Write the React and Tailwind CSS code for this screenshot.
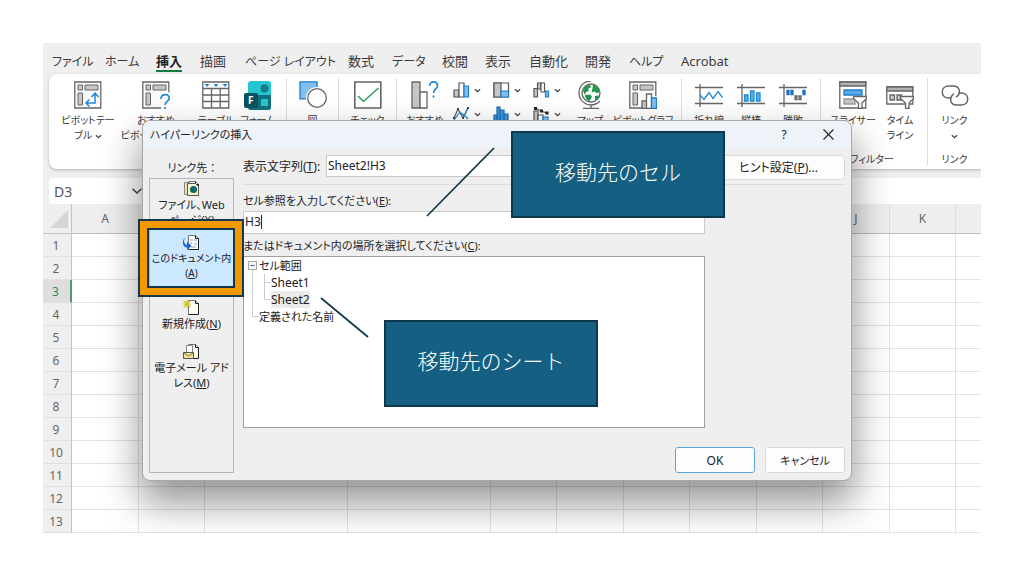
import clsx from "clsx";

const TABS = [
  { label: "ファイル", width: "w-[53px]", kana: true },
  { label: "ホーム", width: "w-[51px]", kana: true },
  { label: "挿入", width: "w-[44px]", active: true },
  { label: "描画", width: "w-[45px]" },
  { label: "ページ レイアウト", width: "w-[103px]", kana: true },
  { label: "数式", width: "w-[44px]" },
  { label: "データ", width: "w-[50px]", kana: true },
  { label: "校閲", width: "w-[43px]" },
  { label: "表示", width: "w-[44px]" },
  { label: "自動化", width: "w-[56px]" },
  { label: "開発", width: "w-[44px]" },
  { label: "ヘルプ", width: "w-[52px]", kana: true },
  { label: "Acrobat", width: "w-[60px]" },
];

const COLUMNS = [
  { name: "A", width: "w-[67px]" },
  { name: "B", width: "w-[66px]" },
  { name: "C", width: "w-[143px]" },
  { name: "D", width: "w-[143px]" },
  { name: "E", width: "w-[66px]" },
  { name: "F", width: "w-[67px]" },
  { name: "G", width: "w-[66px]" },
  { name: "H", width: "w-[67px]" },
  { name: "I", width: "w-[66px]" },
  { name: "J", width: "w-[67px]" },
  { name: "K", width: "w-[66px]" },
  { name: "", width: "w-auto" },
];

const ROWS = [1, 2, 3, 4, 5, 6, 7, 8, 9, 10, 11, 12, 13];

export default function App() {
  return (
    <div className="bg-white p-[43px] font-['Noto_Sans','Noto_Sans_CJK_JP',sans-serif] [font-feature-settings:'palt'] text-[#3b3b3b]">
      <div className="relative overflow-hidden bg-[#efefef]">
        <MenuTabs />
        <Ribbon />
        <FormulaRow />
        <Sheet />
        <HyperlinkDialog />
        <Annotations />
      </div>
    </div>
  );
}

function MenuTabs() {
  return (
    <nav className="flex h-[31px] pl-[9px] pt-2 leading-[18px]">
      {TABS.map((tab) => (
        <div key={tab.label} className={clsx("shrink-0", tab.width)}>
          <button
            className={clsx(
              "whitespace-nowrap",
              tab.kana ? "text-[12px]" : "text-[13px]",
              tab.active && "border-b-2 border-[#107c41] font-bold text-[#222]"
            )}
          >
            {tab.label}
          </button>
        </div>
      ))}
    </nav>
  );
}

function Ribbon() {
  return (
    <div className="ml-[6px] flex h-[95px] overflow-hidden rounded-l-lg bg-white pl-[5px] text-[10px] leading-[15px] shadow-[0_1px_3px_rgba(0,0,0,0.25)]">
      <Tool width="w-[68px]" icon={<PivotIcon />} label={<>ピボットテー<br />ブル <Caret /></>} />
      <Tool width="w-[68px]" icon={<PivotHelpIcon />} label={<>おすすめ<br />ピボットテーブル</>} />
      <Tool width="w-[52px]" icon={<TableIcon />} label="テーブル" />
      <Tool width="w-[32px]" icon={<FormsIcon />} label="フォーム" />
      <Divider className="ml-3" />
      <Tool width="w-[51px]" icon={<ShapesIcon />} label="図" />
      <Divider />
      <Tool width="w-[57px]" icon={<CheckIcon />} label="チェック" />
      <Divider />
      <Tool width="w-[56px]" icon={<ChartHelpIcon />} label="おすすめ" />
      <div className="grid shrink-0 grid-cols-[40px_40px_40px] grid-rows-[16px_16px] content-start gap-y-2 pt-2">
        <MiniTool><ColumnChartIcon /></MiniTool>
        <MiniTool><TreemapIcon /></MiniTool>
        <MiniTool><WaterfallIcon /></MiniTool>
        <MiniTool><LineChartIcon /></MiniTool>
        <MiniTool><HistogramIcon /></MiniTool>
        <MiniTool><ComboChartIcon /></MiniTool>
      </div>
      <Tool width="w-[34px]" icon={<GlobeIcon />} label="マップ" />
      <Tool width="w-[72px]" icon={<PivotChartIcon />} label="ピボットグラフ" />
      <Divider className="ml-0.5" />
      <div className="flex shrink-0 px-[6px]">
        <Tool width="w-[42px]" icon={<SparkLineIcon />} label="折れ線" />
        <Tool width="w-[42px]" icon={<SparkColumnIcon />} label="縦棒" />
        <Tool width="w-[42px]" icon={<SparkWinLossIcon />} label="勝敗" />
      </div>
      <Divider />
      <div className="flex shrink-0 flex-col pr-3">
        <div className="flex flex-1">
          <Tool width="w-[64px]" icon={<SlicerIcon />} label="スライサー" />
          <Tool width="w-[30px]" icon={<TimelineIcon />} label={<>タイム<br />ライン</>} />
        </div>
        <div className="pb-[2px] pl-2 text-center">フィルター</div>
      </div>
      <Divider />
      <div className="flex w-[53px] shrink-0 flex-col">
        <div className="flex flex-1">
          <Tool width="w-[53px]" icon={<LinkIcon />} label={<>リンク<br /><Caret /></>} />
        </div>
        <div className="pb-[2px] text-center">リンク</div>
      </div>
      <Divider />
    </div>
  );
}

function Tool({ icon, label, width }) {
  return (
    <button className={clsx("flex shrink-0 flex-col items-center gap-1 whitespace-nowrap pt-[7px]", width)}>
      {icon}
      <span>{label}</span>
    </button>
  );
}

function MiniTool({ children }) {
  return (
    <button className="flex items-center gap-1">
      {children}
      <Caret />
    </button>
  );
}

function Divider({ className }) {
  return <div className={clsx("mb-1 mt-1 w-px shrink-0 bg-[#dcdcdc]", className)} />;
}

function Caret({ size = 7 }) {
  return (
    <svg width={size} height={size} viewBox="0 0 8 8" className="inline shrink-0" fill="none" stroke="#444" strokeWidth={size > 8 ? 1 : 1.5}>
      <path d="M1 2.5 4 5.3 7 2.5" />
    </svg>
  );
}

function FormulaRow() {
  return (
    <div className="mt-[9px] flex h-[26px] gap-2 pl-[6px]">
      <div className="flex w-[98px] items-center rounded bg-white pl-[5px] pr-1">
        <input aria-label="名前ボックス" defaultValue="D3" className="w-full min-w-0 bg-transparent text-[14px] text-[#555] outline-none" />
        <Caret size={12} />
      </div>
      <input aria-label="数式バー" className="min-w-0 flex-1 bg-white outline-none" />
    </div>
  );
}

function Sheet() {
  return (
    <table className="w-full table-fixed border-separate border-spacing-0 bg-white text-[12px] leading-4 text-[#666]">
      <colgroup>
        <col className="w-[29px]" />
        {COLUMNS.map((col, i) => (
          <col key={i} className={col.width} />
        ))}
      </colgroup>
      <thead>
        <tr className="h-[30px] bg-[#efefef]">
          <th className="border-b border-r border-[#c4c4c4] p-0">
            <svg width="20" height="20" viewBox="0 0 20 20" className="ml-1.5">
              <path d="M19 1v18H1z" fill="#d6d6d6" />
            </svg>
          </th>
          {COLUMNS.map((col, i) => (
            <th key={i} className="border-b border-r border-b-[#bdbdbd] border-r-[#dcdcdc] p-0 font-normal last:border-r-0">
              {col.name}
            </th>
          ))}
        </tr>
      </thead>
      <tbody>
        {ROWS.map((row) => (
          <tr key={row} className="h-[23px]">
            <th
              className={clsx(
                "border-b border-b-[#e0e0e0] p-0 pr-0.5 pt-px font-normal",
                row === 3
                  ? "border-r-2 border-r-[#4f9a6d] bg-[#dedede] text-[#2f8a55]"
                  : "border-r border-r-[#c4c4c4] bg-[#efefef]"
              )}
            >
              {row}
            </th>
            {COLUMNS.map((col, i) => (
              <td key={i} className="border-b border-r border-[#e2e2e2] p-0 last:border-r-0" />
            ))}
          </tr>
        ))}
      </tbody>
    </table>
  );
}

function HyperlinkDialog() {
  return (
    <div
      role="dialog"
      aria-labelledby="dialog-title"
      className="absolute left-[99px] top-[77px] w-[710px] rounded-lg border border-[#a8a8a8] bg-[#efefef] text-[11px] leading-[15px] text-[#222] shadow-[0_20px_38px_2px_rgba(0,0,0,0.42)]"
    >
      <div className="flex h-[27px] items-center rounded-t-lg bg-[#eef3fa] pl-[7px]">
        <h2 id="dialog-title" className="flex-1">ハイパーリンクの挿入</h2>
        <button className="w-[44px] text-[12px]">?</button>
        <button aria-label="閉じる" className="flex w-[45px] justify-center">
          <svg width="11" height="11" viewBox="0 0 11 11" stroke="#222" strokeWidth="1.1">
            <path d="M.5.5l10 10M10.5.5l-10 10" />
          </svg>
        </button>
      </div>
      <div className="flex gap-[9px] px-[6px] pb-[7px] pt-[7px]">
        <LinkTargets />
        <div className="flex flex-1 flex-col">
          <div className="flex h-[25px] items-start">
            <label htmlFor="display-text" className="w-[83px] shrink-0 whitespace-nowrap pt-1 text-[12px]">
              表示文字列(<u>T</u>):
            </label>
            <input
              id="display-text"
              defaultValue="Sheet2!H3"
              className="h-[22px] w-[380px] border border-[#c9c9c9] bg-white px-px pb-0.5 text-[12px] outline-none"
            />
            <button className="ml-[6px] h-[25px] flex-1 rounded-sm border border-[#dadada] bg-[#fdfdfd] text-[12px]">
              ヒント設定(<u>P</u>)...
            </button>
          </div>
          <hr className="mt-1 border-[#dcdcdc]" />
          <label htmlFor="cell-ref" className="mt-2">
            セル参照を入力してください(<u>E</u>):
          </label>
          <div className="relative mt-[3px] w-[462px]">
            <input
              id="cell-ref"
              defaultValue="H3"
              className="block h-[23px] w-full border border-[#c9c9c9] bg-white px-px pb-0.5 text-[12px] outline-none"
            />
            <span className="absolute left-[18px] top-1 h-[14px] w-px bg-[#222]" />
          </div>
          <p className="mt-1">
            またはドキュメント内の場所を選択してください(<u>C</u>):
          </p>
          <PlaceTree />
          <div className="mt-auto flex justify-end gap-[10px]">
            <button className="h-[26px] w-[80px] rounded-[3px] border border-[#5aa7e0] bg-[#fdfdfd] text-[12px]">OK</button>
            <button className="h-[26px] w-[80px] rounded-[3px] border border-[#d5d9dd] bg-[#fdfdfd]">キャンセル</button>
          </div>
        </div>
      </div>
    </div>
  );
}

function LinkTargets() {
  return (
    <div className="w-[85px] shrink-0">
      <div className="mb-[3px] pt-[5px] text-center">リンク先 ：</div>
      <div className="flex h-[295px] flex-col gap-[5px] border border-[#b4b6c4]">
        <Target icon={<WebPageIcon />}>ファイル、Web<br />ページ(<u>X</u>)</Target>
        <Target icon={<ThisDocIcon />} selected>このドキュメント内<br />(<u>A</u>)</Target>
        <Target icon={<NewDocIcon />}>新規作成(<u>N</u>)</Target>
        <Target icon={<MailIcon />}>電子メール アド<br />レス(<u>M</u>)</Target>
      </div>
    </div>
  );
}

function Target({ icon, selected, children }) {
  return (
    <button
      className={clsx(
        "flex min-h-[39px] flex-col items-center whitespace-nowrap",
        selected ? "-mt-[3px] h-[63px] bg-[#cce8ff] pt-[5px] text-[10px]" : "pb-px pt-0.5"
      )}
    >
      {icon}
      <span>{children}</span>
    </button>
  );
}

function PlaceTree() {
  return (
    <div role="tree" className="mt-[3px] h-[172px] w-[462px] border border-[#a0a0a0] bg-white text-[12px] leading-[17px]">
      <div role="treeitem" className="flex items-center pl-1 text-[11px]">
        <svg width="11" height="17" viewBox="0 0 11 17" fill="none">
          <rect x=".5" y="4.5" width="8" height="8" fill="#f4f4f4" stroke="#a8a8a8" />
          <path d="M2.5 8.5h4" stroke="#4466a8" />
          <path d="M4.5 13v4" stroke="#ccc" />
        </svg>
        セル範囲
      </div>
      <div role="treeitem" className="flex items-center pl-1">
        <svg width="23" height="17" fill="none" stroke="#ccc">
          <path d="M4.5 0v17M16.5 0v17M16.5 8.5h6" />
        </svg>
        Sheet1
      </div>
      <div role="treeitem" aria-selected="true" className="flex items-center pl-1">
        <svg width="23" height="17" fill="none" stroke="#ccc">
          <path d="M4.5 0v17M16.5 0v8.5h6" />
        </svg>
        <span className="bg-[#ebebeb]">Sheet2</span>
      </div>
      <div role="treeitem" className="flex items-center pl-1 text-[11px]">
        <svg width="11" height="17" fill="none" stroke="#ccc">
          <path d="M4.5 0v8.5h6" />
        </svg>
        定義された名前
      </div>
    </div>
  );
}

/* Callouts laid over the dialog */
function Annotations() {
  return (
    <div className="text-[21px] font-light text-white [font-feature-settings:normal]">
      <div className="absolute left-[95px] top-[176px] h-[78px] w-[106px] border-2 border-[#12384a] bg-transparent">
        <div className="h-full w-full border-[7px] border-[#f39800]">
          <div className="h-full w-full border-2 border-[#12384a]" />
        </div>
      </div>
      <svg className="absolute left-[383px] top-[104px]" width="70" height="71" stroke="#12384a" strokeWidth="1.7">
        <path d="M68 1 1 69" />
      </svg>
      <svg className="absolute left-[277px] top-[254px]" width="50" height="42" stroke="#12384a" strokeWidth="1.7">
        <path d="M1 1 48 40" />
      </svg>
      <div className="absolute left-[468px] top-[88px] flex h-[87px] w-[214px] items-center justify-center border-2 border-[#0d384d] bg-[#156082] pb-1">
        移動先のセル
      </div>
      <div className="absolute left-[341px] top-[277px] flex h-[87px] w-[214px] items-center justify-center border-2 border-[#0d384d] bg-[#156082] pb-1">
        移動先のシート
      </div>
    </div>
  );
}

/* Ribbon icons */
function Big({ children }) {
  return (
    <svg width="28" height="28" viewBox="0 0 28 28" fill="none" stroke="#666" strokeWidth="1.3" className="shrink-0">
      {children}
    </svg>
  );
}

function PivotIcon() {
  return (
    <Big>
      <path d="M.8 1h26v26H.8z" fill="#fafafa" />
      <path d="M4 4h4.500v5H4zM11 4h13v5H11zM4 12h4.500v12H4z" fill="#c8c6c4" strokeWidth="1" />
      <path d="M12.500 22H21v-9.500M15.500 18.500 12 22l3.500 3.500M17.500 16 21 12.200 24.500 16" stroke="#1e8bd4" strokeWidth="1.500" />
    </Big>
  );
}

function PivotHelpIcon() {
  return (
    <Big>
      <path d="M19 27H.8V1h26v11" fill="#fafafa" />
      <path d="M4 4h4.500v5H4zM11 4h13v5H11zM4 12h4.500v12H4z" fill="#c8c6c4" strokeWidth="1" />
      <path d="M19 17c0-6 9-5.500 8.500 0-.3 3-4.500 3.200-4.500 7" stroke="#fff" strokeWidth="5" />
      <path d="M19 18c0-6 8.700-5.500 8.200-.5-.3 3-4.200 3-4.200 6.500M23 26v2" stroke="#1e8bd4" strokeWidth="1.700" />
    </Big>
  );
}

function TableIcon() {
  return (
    <Big>
      <path d="M.8 1h26v26H.8zM1 7.500h26M1 14h26M1 20.500h26M9.500 7v20M18.200 7v20" fill="#fff" />
      <path d="M2.500 3h5L5 6zM11.500 3h5L14 6zM20.500 3h5L23 6z" fill="#1e8bd4" stroke="none" />
    </Big>
  );
}

function FormsIcon() {
  return (
    <svg width="28" height="30" viewBox="0 0 28 30" className="-mb-0.5 shrink-0">
      <rect x="4" width="23" height="29" rx="3" fill="#25c5cf" />
      <path d="M4 14h23v12a3 3 0 0 1-3 3H7a3 3 0 0 1-3-3z" fill="#13717f" />
      <circle cx="20.500" cy="7.500" r="4" fill="#137d8a" />
      <rect x="17" y="18" width="7" height="7" fill="#2bc4cc" />
      <rect y="12" width="14" height="15" rx="2" fill="#08525f" />
      <text x="4" y="23" fontSize="10" fontWeight="bold" fill="#fff">F</text>
    </svg>
  );
}

function ShapesIcon() {
  return (
    <Big>
      <path d="M1 .800h17v17H1z" fill="#83beec" stroke="#1e7fcb" />
      <circle cx="18" cy="17" r="11" fill="#fff" stroke="none" />
      <circle cx="18" cy="17" r="9.300" fill="#fff" />
    </Big>
  );
}

function CheckIcon() {
  return (
    <Big>
      <path d="M.8 1h26v26H.8z" fill="#fff" strokeWidth="1.600" />
      <path d="M4 15l5.500 5.500L24.500 7" stroke="#2ea363" strokeWidth="1.600" />
    </Big>
  );
}

function ChartHelpIcon() {
  return (
    <Big>
      <path d="M1 1h8v26H1z" fill="#c8c6c4" />
      <path d="M9 11h7v16H9z" fill="#fff" />
      <path d="M18.500 5c0-5.500 8.500-5.500 8 0-.3 3.200-4 3-4 7M22.500 14.500v2" stroke="#1e8bd4" strokeWidth="1.700" />
    </Big>
  );
}

function GlobeIcon() {
  return (
    <Big>
      <circle cx="15" cy="12" r="9" fill="#fff" />
      <path d="M7 10c1-4 4-6 7-6l1 2-3 2 1 2-3 1-1 3zM17 3.500c4 1 6 4 6.500 7l-2 2-3-2-3 1 1-4zM9 14l5-.5 2 2-2 4-1.500.500c-2-1-3.500-3-3.500-6zM19 15l4-.5c-.5 2-2 4-4 5z" fill="#1f9a4c" stroke="none" />
      <path d="M15 0C8 0 3 5 3 12c0 7 6 12 12 12 4 0 7-2 9-4M15 24v3M7 27.300h16" />
    </Big>
  );
}

function PivotChartIcon() {
  return (
    <Big>
      <path d="M13 27H.8V1h26v14" fill="#fafafa" />
      <path d="M4 4h4.500v5H4zM11 4h13v5H11zM4 12h4.500v12H4z" fill="#c8c6c4" strokeWidth="1" />
      <path d="M13 20h5v7.500h-5z" fill="#c8c6c4" />
      <path d="M17.500 13h5v14.500h-5z" fill="#fff" />
      <path d="M22.500 17h5v10.500h-5z" fill="#83beec" stroke="#1e7fcb" />
    </Big>
  );
}

function SparkLineIcon() {
  return (
    <Big>
      <path d="M0 6.500h28M0 22.500h28M5 3v23" />
      <path d="M5 14l4 4.500 5-7 4 6 5-7 4.500 6" stroke="#1e8bd4" />
    </Big>
  );
}

function SparkColumnIcon() {
  return (
    <Big>
      <path d="M0 6.500h28M0 22.500h28M5 3v23" />
      <path d="M7.500 14h3.500v6H7.500zM13.500 10H17v10h-3.500zM19.500 12H23v8h-3.500z" fill="#5db2ee" stroke="#1e8bd4" />
    </Big>
  );
}

function SparkWinLossIcon() {
  return (
    <Big>
      <path d="M0 6.500h28M0 22.500h28M5 3v23" />
      <path d="M8 9.500h2v4H8zM12 9.500h2v4h-2zM24 9.500h2v4h-2z" fill="#1e6fc0" stroke="#1e6fc0" />
      <path d="M16 15h2v3.500h-2zM20 15h2v3.500h-2z" fill="#aaa" />
    </Big>
  );
}

function SlicerIcon() {
  return (
    <Big>
      <path d="M.8 1h26v26H.8z" fill="#fff" />
      <path d="M.8 1h26v4H.8z" fill="#b5b3b1" />
      <path d="M5 9h18v5H5z" fill="#5aa9ea" stroke="#1e7fcb" />
      <path d="M5 18h11v5H5z" fill="#c8c6c4" stroke="#999" />
      <path d="M14.500 15.500h13v2l-4.500 4.500v5.500h-3.500V22L14.500 17.500z" fill="#fff" />
    </Big>
  );
}

function TimelineIcon() {
  return (
    <Big>
      <path d="M.8 6h26v17H.8z" fill="#fff" />
      <path d="M.8 6h26v4H.8z" fill="#b5b3b1" />
      <path d="M4 14h4.500v5H4zM11 14h4.500v5H11z" fill="#c8c6c4" />
      <path d="M14.500 15.500h13v2l-4.500 4.500v5.500h-3.500V22L14.500 17.500z" fill="#fff" />
    </Big>
  );
}

function LinkIcon() {
  return (
    <Big>
      <path d="M10.500 17H8C-1 17-1 5 8 5h4.500c6.500 0 8 8 2.500 11" strokeWidth="1.500" />
      <path d="M17.500 12H20c9 0 9 12 0 12h-4.500C9 24 7.500 16 13 13" strokeWidth="1.500" />
    </Big>
  );
}

/* Small chart icons */
function Mini({ children }) {
  return (
    <svg width="17" height="16" viewBox="0 0 17 16" fill="none" stroke="#555" strokeWidth="1.200" className="shrink-0">
      {children}
    </svg>
  );
}

function ColumnChartIcon() {
  return (
    <Mini>
      <path d="M1 8h5v7H1z" fill="#c8c6c4" />
      <path d="M6 1h5v14H6z" fill="#fff" />
      <path d="M11 4h4.500v11H11z" fill="#83beec" stroke="#1e7fcb" />
    </Mini>
  );
}

function TreemapIcon() {
  return (
    <Mini>
      <path d="M1 1h14.500v14H1z" fill="#fff" />
      <path d="M1 1h7v14H1z" fill="#c8c6c4" />
      <path d="M8 9h7.500v6H8z" fill="#83beec" stroke="#1e7fcb" />
    </Mini>
  );
}

function WaterfallIcon() {
  return (
    <Mini>
      <path d="M1 6.500h3.500V15H1z" fill="#c8c6c4" />
      <path d="M4.500 1H8v6H4.500z" fill="#c8c6c4" />
      <path d="M8 1h3.500v9H8z" fill="#fff" />
      <path d="M12.500 9h3v6h-3z" fill="#83beec" stroke="#1e7fcb" />
    </Mini>
  );
}

function LineChartIcon() {
  return (
    <Mini>
      <path d="M1 12l4-9 5 9 5-10" />
      <path d="M1 14 7 6l4 4 4-8M10 8l5 5" stroke="#1e8bd4" />
      <path d="M0 11h2v2H0zM4 2h2v2H4zM9 11h2v2H9zM14 1h2v2h-2z" fill="#444" stroke="none" />
    </Mini>
  );
}

function HistogramIcon() {
  return (
    <Mini>
      <path d="M1 9h3v7H1zM4 1h3v15H4zM7 4h4v12H7zM11 8h4v8h-4z" fill="#3f95db" stroke="#1669b0" />
    </Mini>
  );
}

function ComboChartIcon() {
  return (
    <Mini>
      <path d="M1 5h4v11H1z" fill="#c8c6c4" />
      <path d="M5 9h5v7H5z" fill="#fff" />
      <path d="M10 11h5v5h-5z" fill="#83beec" stroke="#1e7fcb" />
      <path d="M2 2l6 3 6 2" />
      <path d="M1 1h3v3H1zM7 3.500h3v3H7zM12.500 5.500h3v3h-3z" fill="#222" stroke="none" />
    </Mini>
  );
}

/* Icons of the link target list */
function Page({ children }) {
  return (
    <svg width="17" height="16" viewBox="0 0 17 16" className="shrink-0">
      <path d="M5.500.500h7l3 3v11h-10z" fill="#fffef2" stroke="#777" />
      <path d="M12.500.500v3h3v11h-10" fill="none" stroke="#222" />
      {children}
    </svg>
  );
}

function WebPageIcon() {
  return (
    <Page>
      <path d="M1.500 1.500h5v12h-5z" fill="#e9e2b0" stroke="#888" />
      <path d="M4.500 2.500h8l3 3v9h-11z" fill="#f7f3d2" stroke="#555" />
      <circle cx="10.500" cy="8.500" r="3.500" fill="#0a6a50" />
      <circle cx="11" cy="8" r="1.400" fill="#2255bb" />
    </Page>
  );
}

function ThisDocIcon() {
  return (
    <Page>
      <path d="M7 5h3M11 5h3M7 8h2M11 9h3M8 12h5" stroke="#7a9be8" />
      <path d="M4 2C0 3 0 9 4 10V6.500L8.500 11 4 15v-2.500C-1.500 12-1.500 3 4 2z" fill="#1c62d8" />
    </Page>
  );
}

function NewDocIcon() {
  return (
    <Page>
      <path d="M4 0v8M0 4h8M1 1l6 6M7 1 1 7" stroke="#d8c31c" strokeWidth="1.200" />
    </Page>
  );
}

function MailIcon() {
  return (
    <Page>
      <path d="M3.500 1.500h6v9h-6z" fill="#fff" stroke="#888" />
      <path d="M.500 8.500h10v6H.500z" fill="#f0e4a0" stroke="#555" />
      <path d="M1 9l4.500 3L10 9" fill="none" stroke="#8a7a30" />
    </Page>
  );
}
